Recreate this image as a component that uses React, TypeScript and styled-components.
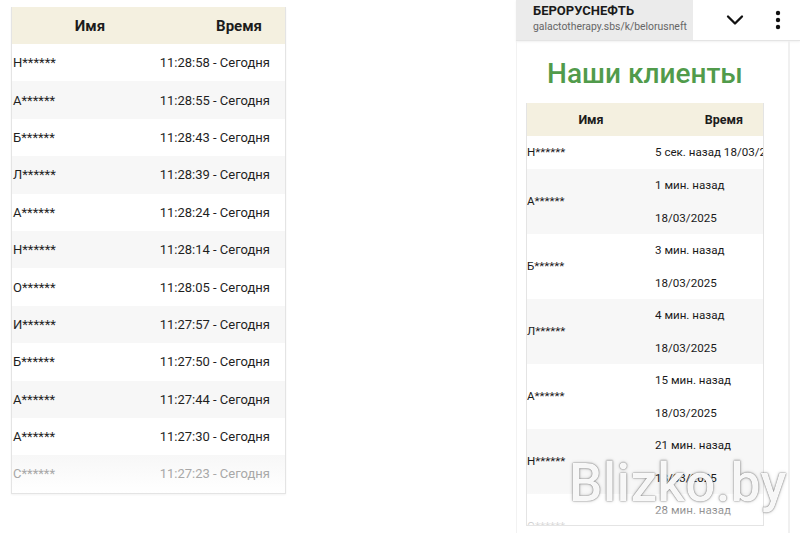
import React from "react";
import styled, { createGlobalStyle, css } from "styled-components";

const GlobalStyle = createGlobalStyle`
  html, body { margin: 0; padding: 0; background: #fff; }
  body { font-family: Roboto, "Noto Sans", "DejaVu Sans", sans-serif; color: #222; }
`;

const Page = styled.div`
  position: relative;
  display: flex;
  align-items: flex-start;
  width: 800px;
  height: 533px;
  overflow: hidden;
  background: #fff;
`;

/* ---------- Left table ---------- */
const LeftTable = styled.div`
  position: relative;
  box-sizing: border-box;
  margin: 7px 0 0 11px;
  width: 275px;
  border: 1px solid #e4e4e4;
  border-top: none;
  box-shadow: 0 1px 2px rgba(0, 0, 0, 0.05);
`;

const LeftHead = styled.div`
  display: grid;
  grid-template-columns: 156px 1fr;
  align-items: center;
  height: 37px;
  background: #f4f0e0;
  font-size: 15px;
  font-weight: 700;
  color: #1c1c1c;
`;

const HeadCell = styled.div<{ $align: "center" | "right"; $pad?: number }>`
  text-align: ${(p) => p.$align};
  padding-right: ${(p) => p.$pad ?? 0}px;
`;

const LeftRow = styled.div<{ $alt: boolean; $faded?: boolean }>`
  display: flex;
  align-items: center;
  justify-content: space-between;
  height: 37.4px;
  padding-right: 15px;
  font-size: 13px;
  color: #1f1f1f;
  background: ${(p) => (p.$alt ? "#f7f7f7" : "#fff")};
  ${(p) =>
    p.$faded &&
    css`
      color: #a8a8a8;
      background: linear-gradient(#f7f7f7, #fff);
    `}
`;

const Name = styled.span`
  padding-left: 1px;
`;

/* ---------- Phone ---------- */
const Phone = styled.div`
  display: flex;
  flex-direction: column;
  margin-left: 230px;
  width: 284px;
  height: 533px;
`;

const TopBar = styled.div`
  display: flex;
  align-items: stretch;
  height: 40px;
  border-bottom: 1px solid #e4e4e4;
  box-shadow: 0 1px 2px rgba(0, 0, 0, 0.06);
  background: #fff;
`;

const TabInfo = styled.div`
  box-sizing: border-box;
  width: 177px;
  padding: 2px 0 0 17px;
  background: #ebebeb;
  display: flex;
  flex-direction: column;
`;

const SiteTitle = styled.div`
  font-size: 13px;
  font-weight: 700;
  line-height: 17px;
  color: #1a1a1a;
`;

const SiteUrl = styled.div`
  font-size: 10.4px;
  line-height: 15px;
  color: #666;
  white-space: nowrap;
`;

const BarIcons = styled.div`
  display: flex;
  align-items: center;
  padding-left: 33px;
  gap: 31px;
`;

const Content = styled.div`
  position: relative;
  box-sizing: border-box;
  display: flex;
  flex-direction: column;
  width: 274px;
  height: 492px;
  padding-left: 9px;
  border-left: 1px solid #f2f2f2;
  border-right: 2px solid #f0f0f0;
  overflow: hidden;
`;

const Title = styled.h1`
  margin: 15px 0 0;
  width: 238px;
  text-align: center;
  font-size: 28px;
  line-height: 35px;
  font-weight: 500;
  color: #519b4b;
`;

const RTable = styled.div`
  position: relative;
  box-sizing: border-box;
  margin-top: 12px;
  width: 238px;
  height: 423px;
  border: 1px solid #e4e4e4;
  border-top: none;
  overflow: hidden;
  &::after {
    content: "";
    position: absolute;
    left: 0;
    right: 0;
    bottom: 0;
    height: 36px;
    background: linear-gradient(rgba(255, 255, 255, 0), rgba(255, 255, 255, 0.85));
  }
`;

const RHead = styled.div`
  display: grid;
  grid-template-columns: 128px 1fr;
  align-items: center;
  height: 33px;
  background: #f4f0e0;
  font-size: 12.5px;
  font-weight: 700;
  color: #1c1c1c;
`;

const RRow = styled.div<{ $alt: boolean; $single?: boolean }>`
  flex-shrink: 0;
  display: grid;
  grid-template-columns: 128px 1fr;
  align-items: center;
  height: ${(p) => (p.$single ? 33 : 65)}px;
  font-size: 11.6px;
  color: #1a1a1a;
  background: ${(p) => (p.$alt ? "#f7f7f7" : "#fff")};
`;

const RTime = styled.div`
  display: flex;
  flex-direction: column;
  white-space: nowrap;
  overflow: hidden;
  line-height: 32.5px;
`;

const RName = styled.div`
  margin-top: -1px;
`;

const Watermark = styled.div`
  position: absolute;
  left: 569px;
  top: 452px;
  font-family: Roboto, "Noto Sans", sans-serif;
  font-size: 53px;
  font-weight: 500;
  letter-spacing: 0.3px;
  color: rgba(255, 255, 255, 0.96);
  text-shadow: 0 0 1px rgba(0, 0, 0, 0.55), 0 0 2px rgba(0, 0, 0, 0.35), 0 0 4px rgba(0, 0, 0, 0.15);
  pointer-events: none;
`;

const leftRows: [string, string][] = [
  ["Н******", "11:28:58"],
  ["А******", "11:28:55"],
  ["Б******", "11:28:43"],
  ["Л******", "11:28:39"],
  ["А******", "11:28:24"],
  ["Н******", "11:28:14"],
  ["О******", "11:28:05"],
  ["И******", "11:27:57"],
  ["Б******", "11:27:50"],
  ["А******", "11:27:44"],
  ["А******", "11:27:30"],
  ["С******", "11:27:23"],
];

const rightRows: [string, string][] = [
  ["А******", "1 мин. назад"],
  ["Б******", "3 мин. назад"],
  ["Л******", "4 мин. назад"],
  ["А******", "15 мин. назад"],
  ["Н******", "21 мин. назад"],
  ["О******", "28 мин. назад"],
];

const Chevron = () => (
  <svg width="18" height="12" viewBox="0 0 18 12">
    <polyline points="2,2.5 9,9.5 16,2.5" fill="none" stroke="#111" strokeWidth="2.3" strokeLinecap="round" strokeLinejoin="round" />
  </svg>
);

const Kebab = () => (
  <svg width="6" height="22" viewBox="0 0 6 22">
    <circle cx="3" cy="4" r="2.2" fill="#111" />
    <circle cx="3" cy="11" r="2.2" fill="#111" />
    <circle cx="3" cy="18" r="2.2" fill="#111" />
  </svg>
);

export default function App() {
  return (
    <>
      <GlobalStyle />
      <Page>
        <LeftTable>
          <LeftHead>
            <HeadCell $align="center">Имя</HeadCell>
            <HeadCell $align="right" $pad={23}>Время</HeadCell>
          </LeftHead>
          {leftRows.map(([n, t], i) => (
            <LeftRow key={i} $alt={i % 2 === 1} $faded={i === leftRows.length - 1}>
              <Name>{n}</Name>
              <span>{t} - Сегодня</span>
            </LeftRow>
          ))}
        </LeftTable>

        <Phone>
          <TopBar>
            <TabInfo>
              <SiteTitle>БЕРОРУСНЕФТЬ</SiteTitle>
              <SiteUrl>galactotherapy.sbs/k/belorusneft</SiteUrl>
            </TabInfo>
            <BarIcons>
              <Chevron />
              <Kebab />
            </BarIcons>
          </TopBar>
          <Content>
            <Title>Наши клиенты</Title>
            <RTable>
              <RHead>
                <HeadCell $align="center">Имя</HeadCell>
                <HeadCell $align="right" $pad={20}>Время</HeadCell>
              </RHead>
              <RRow $alt={false} $single>
                <RName>Н******</RName>
                <RTime>5 сек. назад 18/03/2025</RTime>
              </RRow>
              {rightRows.map(([n, t], i) => (
                <RRow key={i} $alt={i % 2 === 0}>
                  <RName>{n}</RName>
                  <RTime>
                    <span>{t}</span>
                    <span>18/03/2025</span>
                  </RTime>
                </RRow>
              ))}
            </RTable>
          </Content>
        </Phone>

        <Watermark>Blizko.by</Watermark>
      </Page>
    </>
  );
}
